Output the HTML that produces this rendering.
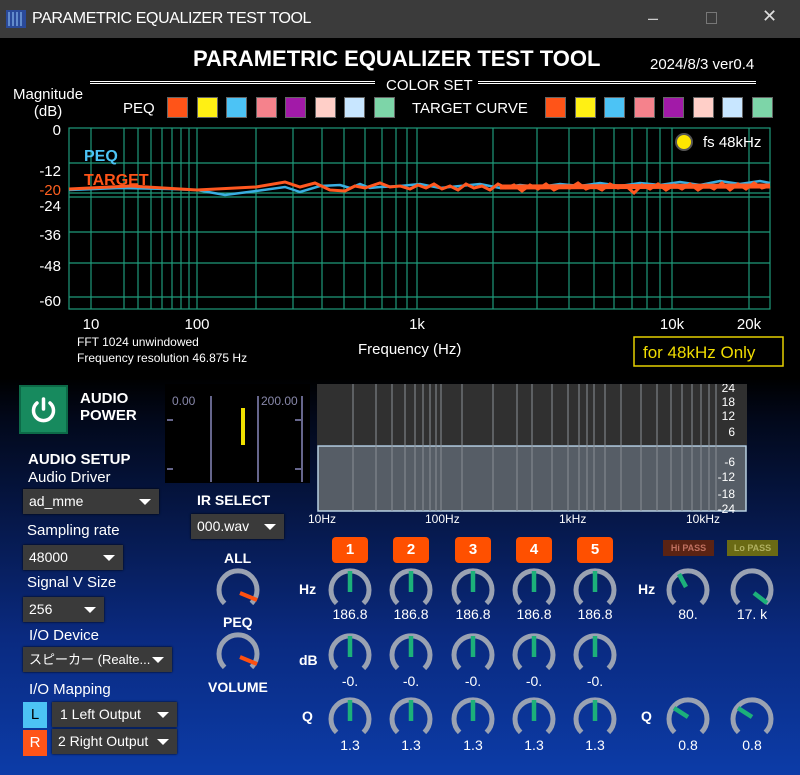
<!DOCTYPE html>
<html><head><meta charset="utf-8"><style>
*{margin:0;padding:0;box-sizing:border-box}
body{width:800px;height:775px;overflow:hidden;background:#3a3a3a;font-family:"Liberation Sans","Noto Sans CJK JP",sans-serif;position:relative;color:#fff}
.a{position:absolute;white-space:nowrap}
.tb{left:0;top:0;width:800px;height:38px;background:#3b3b3b}
.main{left:0;top:38px;width:800px;height:737px;background:linear-gradient(#000 0,#000 340px,#02081a 380px,#0a2a80 600px,#0c3ca8 737px)}
.sw{width:21px;height:21px;top:97px;border:1px solid #666}
.dd{background:#3a3a3a;color:#fff;font-size:14px;height:25px;line-height:25px;padding-left:6px;box-shadow:0 0 2px #000}
.dd:after{content:"";position:absolute;right:8px;top:10px;border-left:6px solid transparent;border-right:6px solid transparent;border-top:6px solid #fff}
.lbl{font-size:15px;color:#fff}
.bt{background:#ff5000;border-radius:4px;width:36px;height:26px;top:537px;font-weight:bold;font-size:15px;text-align:center;line-height:26px;color:#fff}
.v{font-size:14px;color:#fff;text-align:center;width:60px}
.b{font-weight:bold}
</style></head><body>
<div class="a tb"></div>
<svg class="a" style="left:6px;top:10px" width="20" height="18"><rect width="20" height="18" fill="#2a4a9a"/><g stroke="#9cf" stroke-width="1"><path d="M3 2v14M7 2v14M11 2v14M15 2v14"/></g></svg>
<div class="a" style="left:32px;top:10px;font-size:16px;letter-spacing:-0.4px;color:#fff">PARAMETRIC EQUALIZER TEST TOOL</div>
<div class="a" style="left:648px;top:8px;font-size:18px;color:#ccc">&#8211;</div>
<div class="a" style="left:706px;top:12px;width:11px;height:12px;border:1px solid #777"></div>
<div class="a" style="left:762px;top:6px;font-size:18px;color:#ddd">✕</div>
<div class="a main"></div>
<div class="a b" style="left:193px;top:46px;font-size:22px">PARAMETRIC EQUALIZER TEST TOOL</div>
<div class="a" style="left:650px;top:56px;font-size:15px">2024/8/3 ver0.4</div>
<div class="a" style="left:90px;top:81px;width:285px;height:3px;border-top:1px solid #fff;border-bottom:1px solid #fff"></div>
<div class="a" style="left:478px;top:81px;width:278px;height:3px;border-top:1px solid #fff;border-bottom:1px solid #fff"></div>
<div class="a" style="left:386px;top:77px;font-size:15px">COLOR SET</div>
<div class="a" style="left:13px;top:86px;font-size:15px;text-align:center;line-height:17px">Magnitude<br>(dB)</div>
<div class="a" style="left:123px;top:100px;font-size:15px">PEQ</div>
<div class="a" style="left:412px;top:100px;font-size:15px">TARGET CURVE</div>
<div class="a sw" style="left:167px;background:#ff5418"></div><div class="a sw" style="left:197px;background:#fff014"></div><div class="a sw" style="left:226px;background:#4cc3f5"></div><div class="a sw" style="left:256px;background:#f5828c"></div><div class="a sw" style="left:285px;background:#a21aa8"></div><div class="a sw" style="left:315px;background:#ffcfc8"></div><div class="a sw" style="left:344px;background:#c8e6ff"></div><div class="a sw" style="left:374px;background:#7dd5a8"></div>
<div class="a sw" style="left:545px;background:#ff5418"></div><div class="a sw" style="left:575px;background:#fff014"></div><div class="a sw" style="left:604px;background:#4cc3f5"></div><div class="a sw" style="left:634px;background:#f5828c"></div><div class="a sw" style="left:663px;background:#a21aa8"></div><div class="a sw" style="left:693px;background:#ffcfc8"></div><div class="a sw" style="left:722px;background:#c8e6ff"></div><div class="a sw" style="left:752px;background:#7dd5a8"></div>

<svg class="a" style="left:0;top:120px" width="800" height="250">
<g stroke="#1f9a7a" stroke-width="1.2" fill="none">
<rect x="69" y="8" width="701" height="181"/>
<path d="M69 43H770M69 73H770M69 77H770M69 112H770M69 143H770M69 177H770"/>
<path d="M91 8V189M124 8V189M138 8V189M151 8V189M162 8V189M172 8V189M181 8V189M189 8V189M197 8V189M256 8V189M293 8V189M322 8V189M344 8V189M365 8V189M382 8V189M396 8V189M407 8V189M417 8V189M493 8V189M537 8V189M569 8V189M594 8V189M614 8V189M632 8V189M647 8V189M660 8V189M672 8V189M749 8V189"/>
</g>
<g font-size="15" fill="#fff" text-anchor="end" font-family="Liberation Sans,sans-serif">
<text x="61" y="15">0</text><text x="61" y="56">-12</text><text x="61" y="91">-24</text><text x="61" y="120">-36</text><text x="61" y="151">-48</text><text x="61" y="186">-60</text>
<text x="61" y="75" fill="#ff6020">-20</text>
</g>
<text x="84" y="41" font-size="16" font-weight="bold" fill="#4cc3f5">PEQ</text>
<text x="84" y="65" font-size="16" font-weight="bold" fill="#ff5418">TARGET</text>
<polyline fill="none" stroke="#3aaee0" stroke-width="2.5" points="69,70 120,68 170,69 197,70 225,75 256,71 285,67 300,72 320,66 340,65 350,68 360,64 370,68 380,67 400,66 420,64 440,68 460,66 480,64 500,68 520,65 540,67 560,64 580,66 600,63 620,66 640,63 660,65 680,62 700,65 720,61 740,64 760,61 770,63"/>
<polyline fill="none" stroke="#ff5820" stroke-width="3" points="69,69 130,66 197,70 256,67 285,62 300,67 315,63 330,70 345,71 355,66 365,68 380,63 390,67 400,66 410,69 418,65 426,68 434,64 442,69 450,66 458,70 466,64 474,68 482,66 490,70 498,64 506,68 514,65 522,71 530,65 538,69 546,64 554,70 562,66 570,68 578,63 586,69 594,66 602,70 610,64 618,68 626,66 634,73 642,65 650,69 658,64 666,70 674,65 682,69 690,64 698,70 706,65 714,69 722,63 730,70 738,64 746,69 754,63 762,68 770,66"/>
<polyline fill="none" stroke="#ff5820" stroke-width="5" points="500,67 770,66"/>
<circle cx="684" cy="22" r="8" fill="#ffe600" stroke="#555" stroke-width="2"/>
<text x="703" y="27" font-size="15" fill="#fff">fs 48kHz</text>
<g font-size="15" fill="#fff" text-anchor="middle"><text x="91" y="209">10</text><text x="197" y="209">100</text><text x="417" y="209">1k</text><text x="672" y="209">10k</text><text x="749" y="209">20k</text></g>
<text x="77" y="226" font-size="12" fill="#fff">FFT 1024 unwindowed</text>
<text x="77" y="242" font-size="12" fill="#fff">Frequency resolution 46.875 Hz</text>
<text x="358" y="234" font-size="15" fill="#fff">Frequency (Hz)</text>
<rect x="634" y="217" width="149" height="29" fill="none" stroke="#e6d000" stroke-width="1.5"/>
<text x="643" y="238" font-size="17" fill="#f0dc00">for  48kHz Only</text>
</svg>

<div class="a" style="left:19px;top:385px;width:49px;height:49px;background:#178a5e;border:2px solid #0d6a48"></div>
<svg class="a" style="left:28px;top:394px" width="31" height="31"><path d="M9 9A10 10 0 1 0 22 9" fill="none" stroke="#fff" stroke-width="3.5" stroke-linecap="round"/><path d="M15.5 5V15" stroke="#fff" stroke-width="3.5" stroke-linecap="round"/></svg>
<div class="a b" style="left:80px;top:390px;font-size:15px;line-height:17px">AUDIO<br>POWER</div>
<svg class="a" style="left:165px;top:384px" width="145" height="99"><rect width="145" height="99" fill="#000"/>
<text x="7" y="21" font-size="12" fill="#8888aa">0.00</text><text x="96" y="21" font-size="12" fill="#8888aa">200.00</text>
<g stroke="#8888bb" stroke-width="1.5"><path d="M46 12V98M93 12V98M137 12V98M2 36H8M2 85H8M130 36H136M130 85H136"/></g>
<rect x="76" y="24" width="4" height="37" fill="#f0e000"/></svg>
<svg class="a" style="left:317px;top:384px" width="430" height="130">
<rect x="0" y="0" width="430" height="61" fill="#303030"/>
<rect x="1" y="62" width="428" height="65" fill="#565d66" stroke="#b8d0e0" stroke-width="1.5"/>
<g stroke="#8a8f96" stroke-width="1"><path d="M36 0V127M59 0V127M75 0V127M88 0V127M98 0V127M106 0V127M113 0V127M119 0V127M124 0V127M145 0V127M176 0V127M200 0V127M215 0V127M235 0V127M251 0V127M262 0V127M270 0V127M277 0V127M288 0V127M304 0V127M324 0V127M340 0V127M354 0V127M365 0V127M375 0V127M384 0V127M392 0V127M399 0V127"/></g>
<g font-size="12" fill="#fff" text-anchor="end"><text x="418" y="8">24</text><text x="418" y="22">18</text><text x="418" y="36">12</text><text x="418" y="52">6</text><text x="418" y="82">-6</text><text x="418" y="97">-12</text><text x="418" y="114">-18</text><text x="418" y="129">-24</text></g>
</svg>
<div class="a" style="left:308px;top:512px;font-size:12px">10Hz</div>
<div class="a" style="left:425px;top:512px;font-size:12px">100Hz</div>
<div class="a" style="left:559px;top:512px;font-size:12px">1kHz</div>
<div class="a" style="left:686px;top:512px;font-size:12px">10kHz</div>

<div class="a b" style="left:28px;top:451px;font-size:15px">AUDIO SETUP</div>
<div class="a lbl" style="left:28px;top:469px">Audio Driver</div>
<div class="a dd" style="left:23px;top:489px;width:136px">ad_mme</div>
<div class="a lbl" style="left:27px;top:522px">Sampling rate</div>
<div class="a dd" style="left:23px;top:545px;width:100px">48000</div>
<div class="a lbl" style="left:27px;top:574px">Signal V Size</div>
<div class="a dd" style="left:23px;top:597px;width:81px">256</div>
<div class="a lbl" style="left:29px;top:627px">I/O Device</div>
<div class="a dd" style="left:23px;top:647px;width:149px;font-size:13px">スピーカー (Realte...</div>
<div class="a lbl" style="left:29px;top:681px">I/O Mapping</div>
<div class="a" style="left:23px;top:702px;width:24px;height:26px;background:#4cc3f5;color:#000;text-align:center;line-height:26px;font-size:15px">L</div>
<div class="a" style="left:23px;top:730px;width:24px;height:26px;background:#ff5418;color:#fff;text-align:center;line-height:26px;font-size:15px">R</div>
<div class="a dd" style="left:52px;top:702px;width:125px;padding-left:8px">1 Left Output</div>
<div class="a dd" style="left:52px;top:729px;width:125px;padding-left:6px">2 Right Output</div>

<div class="a b" style="left:197px;top:492px;font-size:14px">IR SELECT</div>
<div class="a dd" style="left:191px;top:514px;width:93px">000.wav</div>
<div class="a b" style="left:224px;top:550px;font-size:14px">ALL</div>
<div class="a b" style="left:223px;top:614px;font-size:14px">PEQ</div>
<div class="a b" style="left:208px;top:679px;font-size:14px">VOLUME</div>

<svg class="a" style="left:0;top:0" width="800" height="775">
<defs><path id="arc" d="M-13.4 13.4A19 19 0 1 1 13.4 13.4" fill="none" stroke="#9aa2b2" stroke-width="5"/></defs>
<g transform="translate(238,590)"><use href="#arc"/><path d="M2 3L19 10" stroke="#ff5010" stroke-width="4"/></g>
<g transform="translate(238,654)"><use href="#arc"/><path d="M2 3L19 10" stroke="#ff5010" stroke-width="4"/></g>
<g stroke="#1cb07a" stroke-width="4.5">
<g transform="translate(350,590)"><use href="#arc"/><path d="M0 2V-19"/></g>
<g transform="translate(411,590)"><use href="#arc"/><path d="M0 2V-19"/></g>
<g transform="translate(473,590)"><use href="#arc"/><path d="M0 2V-19"/></g>
<g transform="translate(534,590)"><use href="#arc"/><path d="M0 2V-19"/></g>
<g transform="translate(595,590)"><use href="#arc"/><path d="M0 2V-19"/></g>
<g transform="translate(350,655)"><use href="#arc"/><path d="M0 2V-19"/></g>
<g transform="translate(411,655)"><use href="#arc"/><path d="M0 2V-19"/></g>
<g transform="translate(473,655)"><use href="#arc"/><path d="M0 2V-19"/></g>
<g transform="translate(534,655)"><use href="#arc"/><path d="M0 2V-19"/></g>
<g transform="translate(595,655)"><use href="#arc"/><path d="M0 2V-19"/></g>
<g transform="translate(350,719)"><use href="#arc"/><path d="M0 2V-19"/></g>
<g transform="translate(411,719)"><use href="#arc"/><path d="M0 2V-19"/></g>
<g transform="translate(473,719)"><use href="#arc"/><path d="M0 2V-19"/></g>
<g transform="translate(534,719)"><use href="#arc"/><path d="M0 2V-19"/></g>
<g transform="translate(595,719)"><use href="#arc"/><path d="M0 2V-19"/></g>
<g transform="translate(688,590)"><use href="#arc"/><path d="M-2 -3L-9 -16"/></g>
<g transform="translate(752,590)"><use href="#arc"/><path d="M2 3L15 13"/></g>
<g transform="translate(688,719)"><use href="#arc"/><path d="M0 -2L-14 -11"/></g>
<g transform="translate(752,719)"><use href="#arc"/><path d="M0 -2L-14 -11"/></g>
</g>
</svg>

<div class="a bt" style="left:332px">1</div><div class="a bt" style="left:393px">2</div><div class="a bt" style="left:455px">3</div><div class="a bt" style="left:516px">4</div><div class="a bt" style="left:577px">5</div>
<div class="a" style="left:663px;top:540px;width:51px;height:16px;background:#5a2314;color:#c07060;font-size:9px;font-weight:bold;text-align:center;line-height:16px">Hi PASS</div>
<div class="a" style="left:727px;top:540px;width:51px;height:16px;background:#6a6a14;color:#b0b060;font-size:9px;font-weight:bold;text-align:center;line-height:16px">Lo PASS</div>

<div class="a b" style="left:299px;top:581px;font-size:14px">Hz</div>
<div class="a b" style="left:299px;top:652px;font-size:14px">dB</div>
<div class="a b" style="left:302px;top:708px;font-size:14px">Q</div>
<div class="a b" style="left:638px;top:581px;font-size:14px">Hz</div>
<div class="a b" style="left:641px;top:708px;font-size:14px">Q</div>

<div class="a v" style="left:320px;top:606px">186.8</div><div class="a v" style="left:381px;top:606px">186.8</div><div class="a v" style="left:443px;top:606px">186.8</div><div class="a v" style="left:504px;top:606px">186.8</div><div class="a v" style="left:565px;top:606px">186.8</div>
<div class="a v" style="left:320px;top:673px">-0.</div><div class="a v" style="left:381px;top:673px">-0.</div><div class="a v" style="left:443px;top:673px">-0.</div><div class="a v" style="left:504px;top:673px">-0.</div><div class="a v" style="left:565px;top:673px">-0.</div>
<div class="a v" style="left:320px;top:737px">1.3</div><div class="a v" style="left:381px;top:737px">1.3</div><div class="a v" style="left:443px;top:737px">1.3</div><div class="a v" style="left:504px;top:737px">1.3</div><div class="a v" style="left:565px;top:737px">1.3</div>
<div class="a v" style="left:658px;top:606px">80.</div><div class="a v" style="left:722px;top:606px">17. k</div>
<div class="a v" style="left:658px;top:737px">0.8</div><div class="a v" style="left:722px;top:737px">0.8</div>
</body></html>
